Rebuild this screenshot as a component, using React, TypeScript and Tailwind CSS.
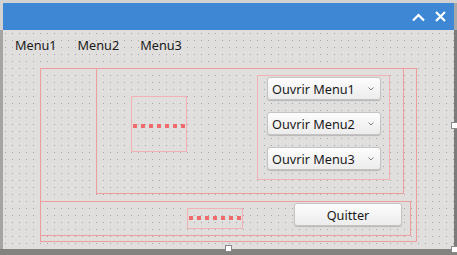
import React from "react";

const font = { fontFamily: '"Noto Sans", "Open Sans", sans-serif' };

function Dots() {
  return (
    <div className="flex gap-[4px]">
      {[0, 1, 2, 3, 4, 5, 6].map((i) => (
        <div key={i} className="w-[4px] h-[4px] bg-[#ef6a6a]" />
      ))}
    </div>
  );
}

function Combo({ label }: { label: string }) {
  return (
    <div className="flex items-center w-[114px] h-[23px] ml-[9px] rounded-[3px] border border-[#c4c4c4] bg-gradient-to-b from-[#fdfdfd] to-[#ececec] shadow-[0_1px_1px_rgba(0,0,0,0.18)] pl-[4px] pr-[6px]">
      <span className="text-[12.7px] leading-[18px] text-[#1a1a1a] flex-1">{label}</span>
      <svg width="6" height="4" viewBox="0 0 6 4">
        <polyline points="0.5,0.5 3,3 5.5,0.5" fill="none" stroke="#808080" strokeWidth="1" />
      </svg>
    </div>
  );
}

export default function App() {
  return (
    <div className="relative w-[457px] h-[255px] flex flex-col bg-[#84827f] overflow-hidden" style={font}>
      <div className="h-[3px] bg-[#d2d2d2]" />
      <div className="flex h-[27px]">
        <div className="w-[3px] bg-[#d2d2d2]" />
        <div className="w-[451px] bg-[#3d87d5] flex items-center justify-end pr-[8px] gap-[10px]">
          <svg width="13" height="9" viewBox="0 0 13 9" className="mt-[1px]">
            <polyline points="1,7.5 6.5,2 12,7.5" fill="none" stroke="#ffffff" strokeWidth="2.2" />
          </svg>
          <svg width="11" height="11" viewBox="0 0 11 11">
            <path d="M1 1 L10 10 M10 1 L1 10" stroke="#ffffff" strokeWidth="2.2" />
          </svg>
        </div>
        <div className="w-[3px] bg-[#a9a9a9]" />
      </div>
      <div className="flex h-[219px]">
        <div className="w-[3px] bg-[#a4a4a4]" />
        <div className="relative w-[451px] bg-[#e0dfdd]">
          <svg className="absolute inset-0" width="451" height="219">
            <defs>
              <pattern id="grid" x="2" y="3" width="7" height="7" patternUnits="userSpaceOnUse">
                <rect width="1" height="1" fill="#a6a6a6" />
              </pattern>
            </defs>
            <rect width="451" height="219" fill="url(#grid)" />
          </svg>
          <div className="relative flex flex-col pt-[6px]">
            <div className="flex h-[18px] pl-[12px] gap-[21px] text-[12.7px] leading-[18px] text-[#1a1a1a]">
              <span>Menu1</span>
              <span>Menu2</span>
              <span>Menu3</span>
            </div>
            <div className="ml-[37px] mt-[14px] w-[377px] h-[174px] border border-[#ef9c9c] flex flex-col">
              <div className="ml-[55px] mt-[-1px] w-[308px] h-[126px] border border-[#ef9c9c] flex items-start">
                <div className="ml-[34px] mt-[27px] w-[56px] h-[56px] border border-[#f0b2b2] pl-[1px] pt-[27px]">
                  <Dots />
                </div>
                <div className="ml-[70px] mt-[6px] w-[133px] h-[105px] border border-[#f0b2b2] flex flex-col gap-[12px] pt-[1px]">
                  <Combo label="Ouvrir Menu1" />
                  <Combo label="Ouvrir Menu2" />
                  <Combo label="Ouvrir Menu3" />
                </div>
              </div>
              <div className="ml-[-1px] mt-[7px] w-[371px] h-[35px] border border-[#ef9c9c] flex items-start">
                <div className="ml-[146px] mt-[6px] w-[56px] h-[21px] border border-[#f0b2b2] pl-[1px] pt-[7px]">
                  <Dots />
                </div>
                <div className="ml-[51px] mt-[1px] w-[108px] h-[23px] rounded-[3px] border border-[#c4c4c4] bg-gradient-to-b from-[#fdfdfd] to-[#ececec] shadow-[0_1px_1px_rgba(0,0,0,0.18)] flex items-center justify-center text-[12.7px] leading-[18px] text-[#1a1a1a]">
                  Quitter
                </div>
              </div>
            </div>
          </div>
        </div>
        <div className="w-[3px] bg-[#7b7b7b]" />
      </div>
      <div className="h-[6px] bg-[#84827f]" />
      <div className="absolute left-[225px] top-[245px] w-[7px] h-[7px] bg-white border border-[#8a8a8a]" />
      <div className="absolute left-[451px] top-[246px] w-[7px] h-[7px] bg-white border border-[#8a8a8a]" />
      <div className="absolute left-[451px] top-[122px] w-[7px] h-[7px] bg-white border border-[#8a8a8a]" />
    </div>
  );
}
